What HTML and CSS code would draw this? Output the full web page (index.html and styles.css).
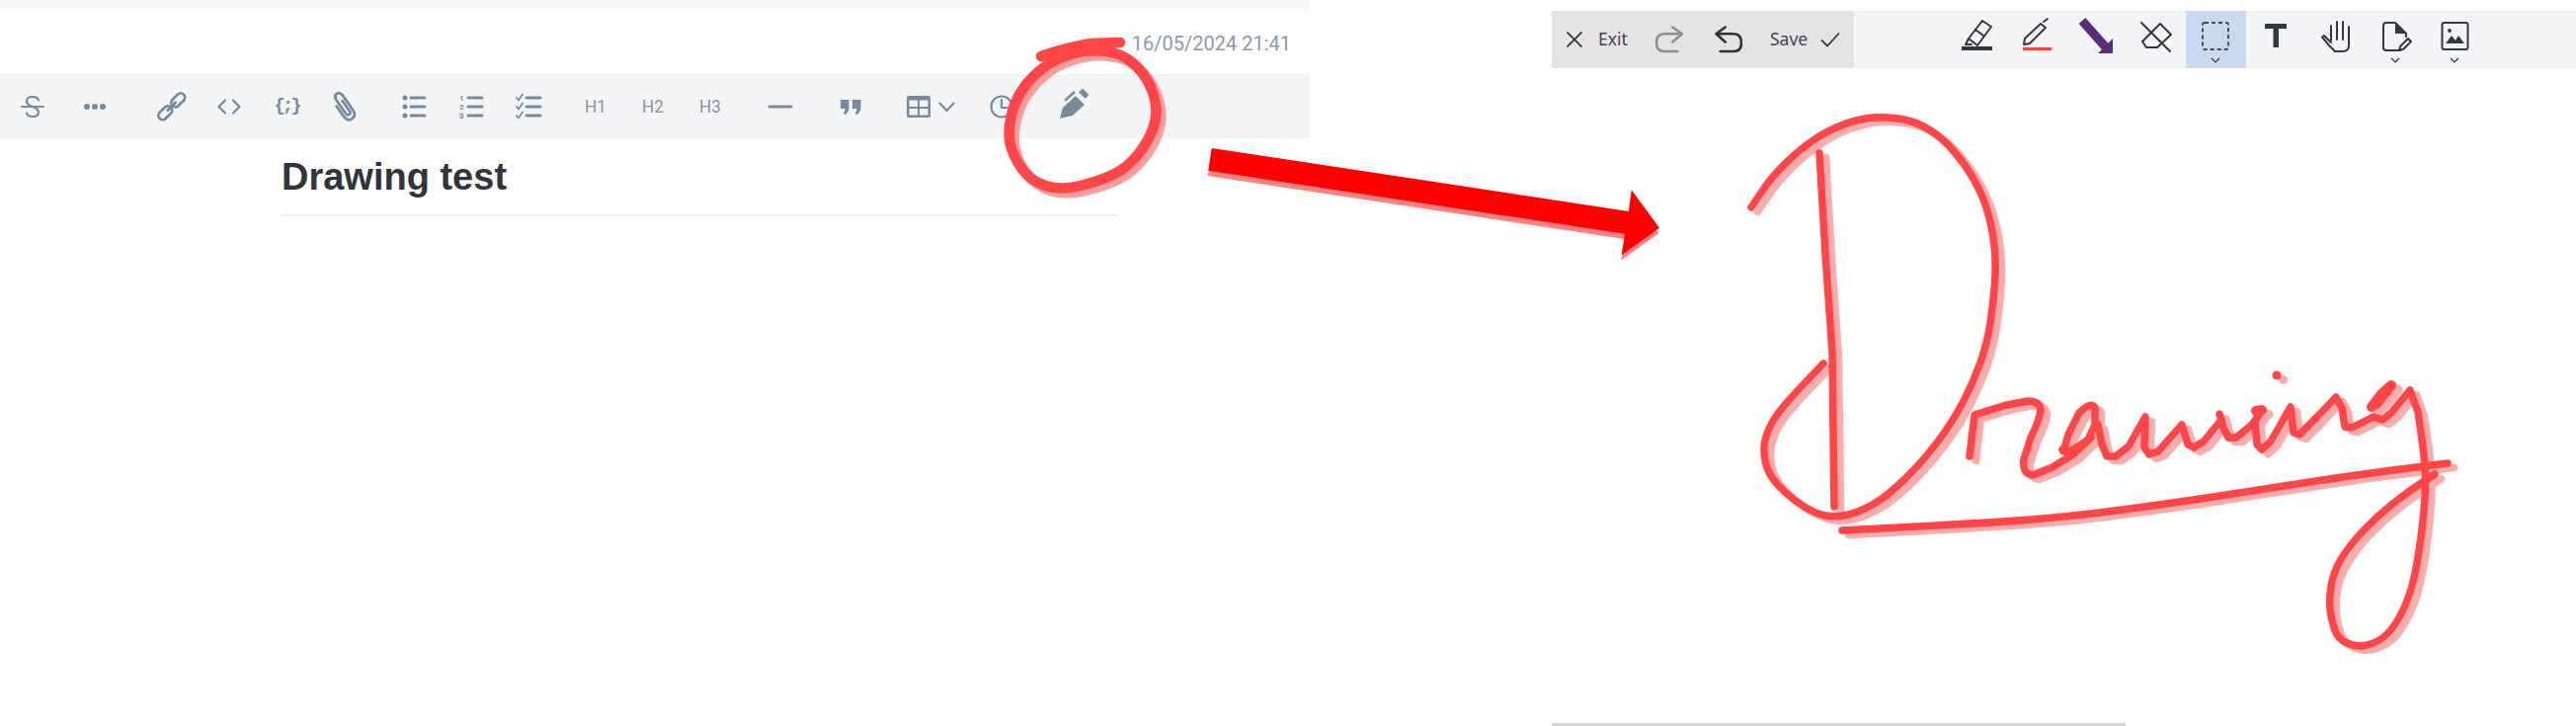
FILE: index.html
```html
<!DOCTYPE html>
<html lang="en">
<head>
<meta charset="utf-8">
<title>Drawing test</title>
<link rel="stylesheet" href="styles.css">
</head>
<body>
<div class="page">
  <section class="editor">
    <div class="strip"></div>
    <div class="meta"><span class="stamp">16/05/2024 21:41</span></div>
    <div class="format-bar">
      <div class="group first">
        <span class="fbtn"><svg class="ficon" viewBox="0 0 28 28"><path d="M3 14H25M20 7.5Q19 4 14 4Q8 4 8 8.5Q8 12 14 14Q20 16 20 19.5Q20 24 14 24Q9 24 8 20.500"/></svg></span>
        <span class="fbtn wide"><svg class="ficon fillicon" viewBox="0 0 28 28"><circle cx="6" cy="14" r="3"/><circle cx="14" cy="14" r="3"/><circle cx="22" cy="14" r="3"/></svg></span>
      </div>
      <div class="group">
        <span class="fbtn"><svg class="ficon big" viewBox="0 0 28 28"><g transform="rotate(-45 14 14)"><rect x="-1" y="10" width="14" height="7.500" rx="3.700"/><rect x="15" y="10" width="14" height="7.500" rx="3.700"/><path d="M9 13.700H19"/></g></svg></span>
        <span class="fbtn"><svg class="ficon" viewBox="0 0 28 28"><path d="M10 7.500L3.500 14L10 20.500M18 7.500L24.500 14L18 20.500"/></svg></span>
        <span class="fbtn"><span class="snippet">{;}</span></span>
        <span class="fbtn"><svg class="ficon big" viewBox="0 0 28 28"><g transform="rotate(-35 14 14)"><path d="M9 10V21Q9 27 14 27Q19 27 19 21V6Q19 1 15.500 1Q12 1 12 6V20Q12 22.500 14 22.500Q16 22.500 16 20V9"/></g></svg></span>
      </div>
      <div class="group">
        <span class="fbtn"><svg class="ficon lines" viewBox="0 0 28 28"><path d="M11 5H25M11 14H25M11 23H25"/><g class="fillicon"><circle cx="5" cy="5" r="2.500"/><circle cx="5" cy="14" r="2.500"/><circle cx="5" cy="23" r="2.500"/></g></svg></span>
        <span class="fbtn"><svg class="ficon lines" viewBox="0 0 28 28"><path d="M11 5H25M11 14H25M11 23H25"/><text class="ol" x="2" y="8">1</text><text class="ol" x="2" y="17">2</text><text class="ol" x="2" y="26">3</text></svg></span>
        <span class="fbtn"><svg class="ficon lines" viewBox="0 0 28 28"><path d="M12 5H26M12 14H26M12 23H26"/><path class="tick" d="M2 5L4 7.500L8 1.500M2 14L4 16.500L8 10.500M2 23L4 25.500L8 19.500"/></svg></span>
      </div>
      <div class="group headings">
        <span class="fbtn head">H1</span>
        <span class="fbtn head">H2</span>
        <span class="fbtn head">H3</span>
      </div>
      <div class="group">
        <span class="fbtn"><svg class="ficon lines" viewBox="0 0 28 28"><path d="M3 14H25"/></svg></span>
      </div>
      <div class="group">
        <span class="fbtn"><svg class="ficon fillicon" viewBox="0 0 28 28"><path d="M4 7H12.500V15Q12.500 19 9 22L6.500 21Q8.500 18.500 8.500 16H4ZM16 7H24.500V15Q24.500 19 21 22L18.500 21Q20.500 18.500 20.500 16H16Z"/></svg></span>
      </div>
      <div class="group table-group">
        <svg class="table-icon" viewBox="0 0 24 22"><rect width="24" height="22" rx="2"/><rect class="cell" x="2.500" y="4.500" width="8.500" height="6.500"/><rect class="cell" x="13" y="4.500" width="8.500" height="6.500"/><rect class="cell" x="2.500" y="13" width="8.500" height="6.500"/><rect class="cell" x="13" y="13" width="8.500" height="6.500"/></svg>
        <svg class="table-caret" viewBox="0 0 17 10"><path d="M1 1L8.500 9L16 1"/></svg>
      </div>
      <span class="fbtn"><svg class="ficon" viewBox="0 0 28 28"><circle cx="14" cy="14" r="10.500"/><path d="M14 7V15H20"/></svg></span>
      <div class="group">
        <span class="fbtn pen"><svg class="pen-icon" viewBox="0 0 32 36"><path d="M2 31L5 20L18 8L27 17L15 28Z"/><path d="M21 4.500L24 1.500Q25 0.500 26 1.500L30.500 6Q31.500 7 30.500 8L28 11Z"/><path class="pen-line" d="M7 13L17 4"/></svg></span>
      </div>
    </div>
    <article class="doc">
      <h1 class="doc-title">Drawing test</h1>
    </article>
  </section>

  <section class="canvas">
    <div class="draw-bar">
      <div class="actions">
        <svg class="act-x" viewBox="0 0 16 16"><path d="M0.500 0.500L15.500 15.500M15.500 0.500L0.500 15.500"/></svg>
        <span class="act-label exit">Exit</span>
        <svg class="act-arrow redo" viewBox="0 0 28 28"><path d="M22.300 26H9Q1 26 1 17.500Q1 8.300 9 8.300H27M17.300 1.500L27 8.300L17.300 16.500"/></svg>
        <svg class="act-arrow undo" viewBox="0 0 28 28"><path d="M5.700 26H19Q27 26 27 17.500Q27 8.300 19 8.300H1.500M10.700 1.500L1.500 8.300L10.700 16.500"/></svg>
        <span class="act-label save">Save</span>
        <svg class="act-check" viewBox="0 0 20 16"><path d="M1 8.500L7 14.500L19 1.500"/></svg>
      </div>
      <div class="tools">
        <span class="tool"><svg class="tool-icon" viewBox="0 0 40 44"><path d="M26 7L35 13L21 32L12 25ZM19 16L27 22M12 25L9 31H15"/><rect class="solid" x="5" y="33" width="31" height="4"/></svg></span>
        <span class="tool"><svg class="tool-icon" viewBox="0 0 40 44"><path d="M7 31L8 25L24 10L29 14L13 30ZM27 8L31 5"/><rect class="redline" x="6" y="34" width="29" height="3"/></svg></span>
        <span class="tool"><svg class="tool-icon" viewBox="0 0 40 44"><path class="purple-shaft" d="M6 7L30 34"/><path class="purple" d="M37 25V40H22Z"/></svg></span>
        <span class="tool"><svg class="tool-icon" viewBox="0 0 40 44"><path d="M24 10L35 21L21 34H10L6 28ZM5 9L34 38"/></svg></span>
        <span class="tool on"><svg class="tool-icon" viewBox="0 0 40 44"><rect class="dash" x="7" y="9" width="26" height="27" rx="2"/></svg><svg class="chev" viewBox="0 0 10 6"><path d="M1 1L5 5L9 1"/></svg></span>
        <span class="tool"><svg class="tool-icon" viewBox="0 0 40 44"><path class="solid" d="M9 10H31V15H23V34H17.500V15H9Z"/></svg></span>
        <span class="tool"><svg class="tool-icon" viewBox="0 0 40 44"><path d="M16 12V27M22 8V26M28 8V26M34 13V32Q34 38 28 38H20L14 32L7 23.500L9 22L16 29"/></svg></span>
        <span class="tool"><svg class="tool-icon" viewBox="0 0 40 44"><path d="M25 37H11Q8 37 8 34V12Q8 9 11 9H20L31 20V23"/><path class="solid" d="M20 9L31 20H20Z"/><path d="M24 37L25 33L33 25L36 28L28 36Z"/></svg><svg class="chev" viewBox="0 0 10 6"><path d="M1 1L5 5L9 1"/></svg></span>
        <span class="tool"><svg class="tool-icon" viewBox="0 0 40 44"><rect x="7.500" y="9" width="26" height="27" rx="2"/><circle class="solid" cx="15" cy="17" r="2"/><path class="solid" d="M11 30L17 22L21 27L24 22L30 30Z"/></svg><svg class="chev" viewBox="0 0 10 6"><path d="M1 1L5 5L9 1"/></svg></span>
      </div>
    </div>
    <div class="sheet"></div>
    <div class="sheet-edge"></div>
  </section>
</div>

<svg class="marks" viewBox="0 0 2608 735" aria-hidden="true">
  <defs>
    <path id="ring" d="M1096 52Q1114 50 1127.500 53.500Q1141 57 1152 68.500Q1163 80 1168 96.500Q1173 113 1168 128Q1163 143 1152 156.500Q1141 170 1127.500 176.500Q1114 183 1094 188Q1074 193 1058.500 188Q1043 183 1034 170Q1025 157 1022.500 144.500Q1020 132 1024.500 114.500Q1029 97 1040.500 83.500Q1052 70 1065.500 62.500Q1079 55 1096 52"/>
    <g id="script">
      <path d="M1773 210L1783 195Q1793 180 1806.500 166.500Q1820 153 1835 142.500Q1850 132 1866.500 126Q1883 120 1896.500 119Q1910 118 1925 120.500Q1940 123 1953.500 131.500Q1967 140 1978.500 153.500Q1990 167 1998.500 182Q2007 197 2012 213.500Q2017 230 2019 248.500Q2021 267 2019.500 287Q2018 307 2015 327Q2012 347 2005 367Q1998 387 1987.500 407Q1977 427 1962 447Q1947 467 1928.500 485Q1910 503 1896.500 510.500Q1883 518 1871.500 521Q1860 524 1848.500 522Q1837 520 1823.500 511Q1810 502 1800 491Q1790 480 1787.500 468.500Q1785 457 1786.500 448.500Q1788 440 1793 430Q1798 420 1810.500 406Q1823 392 1846 368"/>
      <path d="M1842 155L1848 257L1855 357L1857 513"/>
      <path d="M1865 537L1960 532Q2060 527 2117 520Q2174 513 2227.500 505Q2281 497 2335 488.500Q2389 480 2478 469"/>
      <path d="M1994 462L1999 420L2031 410L2053 406Q2065 406 2066 415Q2065 425 2056 443L2049 465Q2047 480 2058 481L2078 473L2099 460L2117 443"/>
      <path d="M2089 457L2094 440L2105 418Q2117 406 2121 413L2121 430L2114 445L2103 453L2092 458L2088 455"/>
      <path d="M2124 430L2128 450L2133 462L2142 462L2155 452L2172 422L2171 453L2176 460L2185 457L2209 430L2215 450L2221 453L2231 447L2249 425"/>
      <path d="M2247 419L2251 433L2256 443L2264 443L2280 430L2287 420"/>
      <path d="M2283 428L2285 450L2290 455L2299 447L2319 412L2322 438L2328 440L2346 422L2365 402L2371 413L2374 432L2381 433L2403 422L2412 425L2421 418L2440 395L2448 417Q2455 463 2455.500 481Q2456 500 2452.500 531.500Q2449 563 2444 585Q2439 607 2430 623.500Q2421 640 2412 646Q2403 652 2394 653.500Q2385 655 2376 651Q2367 647 2363.500 637Q2360 627 2359 617Q2358 607 2360 593.500Q2362 580 2370 566.500Q2378 553 2392 538Q2406 523 2422.500 510Q2439 497 2465 480"/>
      <path class="blob" d="M2401 412L2411 399L2421 390L2406 409"/>
      <path class="blob" d="M2284 416L2290 415"/>
      <path class="dot" d="M2305 380L2305.100 380"/>
    </g>
    <polygon id="arrow" points="1226.700,150 1649,214 1651.700,192.300 1680,230.700 1641.700,258.300 1645,236.700 1223.300,172.700"/>
  </defs>
  <use href="#arrow" class="arrow-shadow" x="-0.500" y="5.300"/>
  <use href="#arrow" class="arrow-main"/>
  <use href="#ring" class="ring ring-shadow" x="5" y="5"/>
  <path class="ring" d="M1054 57Q1080 48 1105 44L1134 43"/>
  <use href="#ring" class="ring"/>
  <use href="#script" class="ink ink-shadow" x="6.500" y="4.500"/>
  <use href="#script" class="ink"/>
</svg>
</body>
</html>
```
FILE: styles.css
```css
* { box-sizing: border-box; }
html, body { margin: 0; padding: 0; background: #fff; overflow: hidden; }
body { position: relative; width: 2608px; height: 735px; font-family: "Liberation Sans", Arial, sans-serif; }

.page { display: flex; height: 735px; }

/* editor pane */
.editor { width: 1326px; flex: none; }
.strip { height: 11px; background: #f8f9f9; }
.meta { height: 64px; display: flex; justify-content: flex-end; padding: 23px 19px 0 0; }
.stamp { font: 20px/20px Roboto, sans-serif; color: #8b97a8; }

.format-bar { height: 65px; background: #f3f4f6; display: flex; align-items: center; gap: 13px; padding-left: 4px; color: #788a9e; }
.group { display: flex; align-items: center; height: 100%; }
.group.first { margin-right: 7px; }
.group.headings { margin-left: -3px; }
.fbtn { width: 58px; height: 100%; display: flex; align-items: center; justify-content: center; flex: none; }
.fbtn.wide { margin-left: 5px; }
.fbtn.pen { width: 62px; }
.ficon { width: 28px; height: 28px; fill: none; stroke: #788a9e; stroke-width: 2.2; stroke-linecap: round; stroke-linejoin: round; }
.ficon.big { width: 32px; height: 32px; stroke-width: 2.4; }
.ficon .fillicon, .ficon.fillicon { fill: #788a9e; stroke: none; }
.ficon.lines { stroke-width: 3; }
.ficon .tick { stroke-width: 1.700; }
.ol { font: 700 8px Roboto, sans-serif; fill: #788a9e; stroke: none; }
.snippet { font: 700 19px/1 "Liberation Mono", monospace; letter-spacing: -3px; color: #788a9e; }
.head { font: 19px/1 Roboto, sans-serif; color: #8494a8; transform: scaleX(.9); }
.table-group { width: 69px; padding-left: 15px; gap: 8px; }
.table-icon { width: 24px; height: 22px; flex: none; fill: #788a9e; }
.table-icon .cell { fill: #f3f4f6; }
.table-caret { width: 17px; height: 10px; flex: none; fill: none; stroke: #788a9e; stroke-width: 2.200; }
.pen-icon { width: 32px; height: 36px; fill: #788a9e; margin-top: -2px; }
.pen-line { fill: none; stroke: #788a9e; stroke-width: 2.500; }

.doc { margin-left: 285px; width: 848px; height: 79px; border-bottom: 2px solid #eeeff0; }
.doc-title { margin: 0; padding-top: 16px; font: 700 38px/46px "Liberation Sans", Arial, sans-serif; color: #30353d; }

/* drawing pane */
.canvas { margin-left: 245px; flex: 1; display: flex; flex-direction: column; padding-top: 11px; }
.draw-bar { height: 58px; background: #f3f4f6; display: flex; flex: none; }
.actions { width: 306px; background: #e4e4e4; display: flex; align-items: center; padding-left: 15px; color: #3a3f47; flex: none; }
.act-x { width: 16px; height: 16px; fill: none; stroke: #33383f; stroke-width: 1.800; flex: none; }
.act-label { font: 17.500px/1 "Noto Sans", sans-serif; color: #3f4650; }
.exit { margin-left: 16px; width: 31px; }
.act-arrow { width: 28px; height: 28px; fill: none; stroke-width: 2.600; stroke-linecap: round; stroke-linejoin: round; flex: none; }
.redo { margin-left: 27px; stroke: #8f8f8f; }
.undo { margin-left: 32px; stroke: #2f3338; }
.save { margin-left: 28px; width: 37px; }
.act-check { width: 20px; height: 16px; margin-left: 14px; fill: none; stroke: #33383f; stroke-width: 1.800; flex: none; }

.tools { display: flex; margin-left: 94px; }
.tool { width: 60.500px; height: 58px; display: flex; flex-direction: column; align-items: center; padding-top: 3px; flex: none; }
.tool.on { background: #c9d9f0; }
.tool-icon { width: 40px; height: 44px; flex: none; fill: none; stroke: #33383f; stroke-width: 2; stroke-linejoin: round; stroke-linecap: round; }
.tool-icon .solid { fill: #33383f; stroke: none; }
.tool-icon .redline { fill: #ff4040; stroke: none; }
.tool-icon .purple { fill: #5a2c7c; stroke: none; }
.tool-icon .purple-shaft { stroke: #5a2c7c; stroke-width: 9; stroke-linecap: butt; }
.tool-icon .dash { stroke: #454c58; stroke-dasharray: 4 3; stroke-linecap: butt; }
.chev { width: 10px; height: 6px; fill: none; stroke: #33383f; stroke-width: 1.200; flex: none; }
.sheet { flex: 1; }
.sheet-edge { width: 581px; height: 3px; background: #d5d5d5; flex: none; }

/* hand-drawn annotations laid over the page */
.marks { position: absolute; left: 0; top: 0; width: 2608px; height: 735px; pointer-events: none; }
.arrow-main { fill: #ff0000; }
.arrow-shadow { fill: #ff8080; }
.ring { fill: none; stroke: #ff4545; stroke-width: 10.500; stroke-linecap: round; stroke-linejoin: round; }
.ring-shadow { stroke: #ff9d9d; }
.ink { fill: none; stroke: #ff4545; stroke-width: 7.500; stroke-linecap: round; stroke-linejoin: round; }
.ink-shadow { stroke: #ffabab; }
.dot { stroke-width: 9; }
.blob { stroke-width: 10; }
```
